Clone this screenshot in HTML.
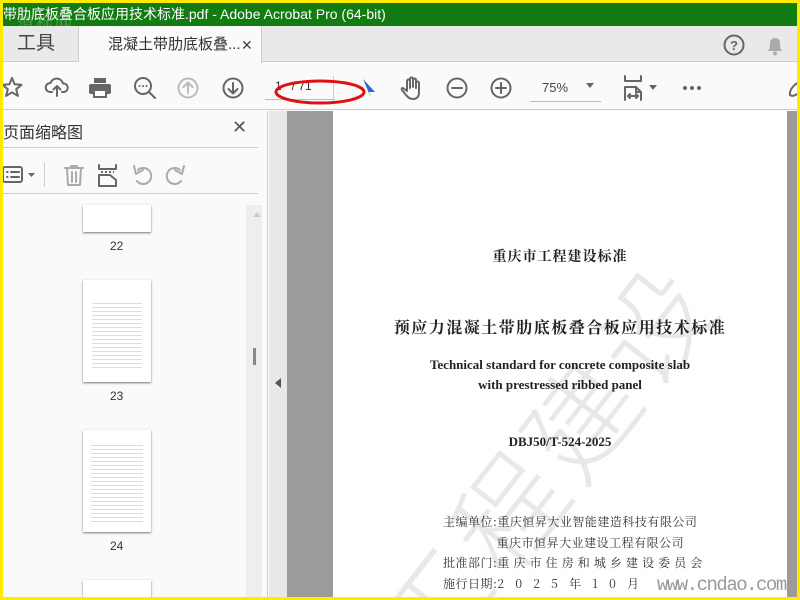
<!DOCTYPE html>
<html><head><meta charset="utf-8"><style>
*{margin:0;padding:0;box-sizing:border-box}
body{width:800px;height:600px;overflow:hidden;background:#ffeb00;position:relative;font-family:"Liberation Sans","Noto Sans CJK SC",sans-serif}
.a{position:absolute}
svg{position:absolute;overflow:visible}
.ic{fill:none;stroke:#666;stroke-width:2;stroke-linecap:round;stroke-linejoin:round}
.cj{font-family:"Noto Sans CJK SC",sans-serif}
.sf{font-family:"Noto Serif CJK SC","Liberation Serif",serif}
</style></head><body>
<div class="a" style="left:3px;top:3px;width:794px;height:594px;background:#fafafa;overflow:hidden">
<!-- title bar -->
<div class="a" style="left:0;top:0;width:794px;height:23px;background:#127b12;color:#fff;font-size:14px;line-height:22px;white-space:nowrap">带肋底板叠合板应用技术标准.pdf - Adobe Acrobat Pro (64-bit)</div>
<div class="a cj" style="left:14px;top:6px;color:rgba(200,220,200,.3);font-size:17px;letter-spacing:2px">道标网</div>
<!-- tab bar -->
<div class="a" style="left:0;top:23px;width:794px;height:36px;background:#e9e9e9;border-bottom:1px solid #ccc"></div>
<div class="a" style="left:0;top:23px;width:76px;height:36px;border-right:1px solid #ccc;color:#444;font-size:19px;line-height:36px;padding-left:14px">工具</div>
<div class="a" style="left:76px;top:23px;width:183px;height:37px;background:#fafafa;border-right:1px solid #ccc;font-size:15px;line-height:38px;padding-left:29px;color:#333">混凝土带肋底板叠... <span style="position:absolute;left:162px;font-size:14px;color:#444">✕</span></div>
<svg style="left:720px;top:31px" width="22" height="22"><circle cx="11" cy="11" r="9.5" class="ic"/><text x="11" y="16" font-size="13" font-weight="bold" fill="#666" text-anchor="middle" font-family="Liberation Sans">?</text></svg>
<svg style="left:762px;top:32px" width="20" height="22"><path d="M3 16 Q5 14 5 9 Q5 3 10 3 Q15 3 15 9 Q15 14 17 16 Z" fill="#aaa"/><circle cx="10" cy="18.5" r="2" fill="#aaa"/></svg>
<!-- toolbar -->
<div class="a" style="left:0;top:60px;width:794px;height:47px;background:#fafafa;border-bottom:1px solid #ccc"></div>
<svg style="left:-2px;top:73px" width="22" height="22"><path d="M11 2 L13.6 8.3 L20.5 8.8 L15.2 13.2 L16.9 19.9 L11 16.3 L5.1 19.9 L6.8 13.2 L1.5 8.8 L8.4 8.3 Z" class="ic"/></svg>
<svg style="left:42px;top:73px" width="24" height="22"><path d="M7 16 H5 A4.5 4.5 0 0 1 5.5 7 A6.5 6.5 0 0 1 18 7.5 A4 4 0 0 1 19 16 H17" class="ic"/><path d="M12 20 V10 M8.5 13.5 L12 10 L15.5 13.5" class="ic"/></svg>
<svg style="left:85px;top:74px" width="24" height="22"><rect x="6" y="1" width="12" height="5" fill="#666"/><rect x="1" y="7" width="22" height="10" rx="2" fill="#666"/><rect x="6" y="13" width="12" height="7" fill="#fff" stroke="#666" stroke-width="2"/></svg>
<svg style="left:130px;top:73px" width="24" height="24"><circle cx="10" cy="10" r="8" class="ic"/><path d="M16 16 L22 22" class="ic" stroke-width="2.5"/><circle cx="6.5" cy="10" r="1" fill="#666"/><circle cx="10" cy="10" r="1" fill="#666"/><circle cx="13.5" cy="10" r="1" fill="#666"/></svg>
<svg style="left:174px;top:74px" width="22" height="22"><circle cx="11" cy="11" r="9.5" class="ic" style="stroke:#bbb"/><path d="M11 16 V6 M6.5 10 L11 5.5 L15.5 10" class="ic" style="stroke:#bbb"/></svg>
<svg style="left:219px;top:74px" width="22" height="22"><circle cx="11" cy="11" r="9.5" class="ic"/><path d="M11 6 V16 M6.5 12 L11 16.5 L15.5 12" class="ic"/></svg>
<div class="a" style="left:262px;top:96px;width:70px;height:1px;background:#bbb"></div>
<div class="a" style="left:272px;top:76px;font-size:12px;color:#333">1&nbsp;&nbsp;&nbsp;/ 71</div>
<div class="a" style="left:330px;top:73px;width:1px;height:26px;background:#ccc"></div>
<svg style="left:270px;top:75px" width="95" height="32"><ellipse cx="47" cy="14" rx="44" ry="11" fill="none" stroke="#e01010" stroke-width="3"/></svg>
<svg style="left:358px;top:75px" width="16" height="22"><path d="M2 1 L14 14 L8 14 L10 20 Z" fill="#2f6bc6"/></svg>
<svg style="left:397px;top:73px" width="26" height="26"><path d="M7 14 V5 a1.5 1.5 0 0 1 3 0 V12 M10 11 V3 a1.5 1.5 0 0 1 3 0 V11 M13 11 V4 a1.5 1.5 0 0 1 3 0 V12 M16 12 V7 a1.5 1.5 0 0 1 3 0 V16 Q19 23 13 23 Q9 23 6 19 L2 14 Q1 12 3 12 L7 15" class="ic" stroke-width="1.8"/></svg>
<svg style="left:443px;top:74px" width="22" height="22"><circle cx="11" cy="11" r="9.5" class="ic"/><path d="M6 11 H16" class="ic"/></svg>
<svg style="left:487px;top:74px" width="22" height="22"><circle cx="11" cy="11" r="9.5" class="ic"/><path d="M6 11 H16 M11 6 V16" class="ic"/></svg>
<div class="a" style="left:527px;top:98px;width:71px;height:1px;background:#bbb"></div>
<div class="a" style="left:539px;top:77px;font-size:13px;color:#444">75%</div>
<div class="a" style="left:583px;top:80px;width:0;height:0;border-left:4px solid transparent;border-right:4px solid transparent;border-top:5px solid #666"></div>
<svg style="left:620px;top:72px" width="26" height="28"><path d="M2 1 V6 H18 V1 M2 25 V12 H13 L18 17 V25 M13 12 V17 H18 M5 21 H15 M5 21 L7 19 M5 21 L7 23 M15 21 L13 19 M15 21 L13 23" class="ic" stroke-width="1.8"/></svg>
<div class="a" style="left:646px;top:82px;width:0;height:0;border-left:4px solid transparent;border-right:4px solid transparent;border-top:5px solid #666"></div>
<div class="a" style="left:680px;top:83px;font-size:0"><span style="display:inline-block;width:4px;height:4px;border-radius:2px;background:#666;margin-right:3px"></span><span style="display:inline-block;width:4px;height:4px;border-radius:2px;background:#666;margin-right:3px"></span><span style="display:inline-block;width:4px;height:4px;border-radius:2px;background:#666"></span></div>
<svg style="left:784px;top:76px" width="12" height="20"><path d="M10 4 Q2 10 3 16 Q6 18 10 15" class="ic"/></svg>
<!-- left panel -->
<div class="a" style="left:0;top:108px;width:265px;height:490px;background:#fafafa;border-right:1px solid #ccc"></div>
<div class="a" style="left:0;top:116px;font-size:16px;color:#333">页面缩略图</div>
<div class="a" style="left:229px;top:114px;font-size:18px;color:#555">✕</div>
<div class="a" style="left:0;top:144px;width:255px;height:1px;background:#ccc"></div>
<svg style="left:-1px;top:162px" width="36" height="20"><rect x="1" y="2" width="19" height="15" rx="2" class="ic" stroke-width="1.8"/><path d="M5 7 H5.5 M9 7 H17 M5 12 H5.5 M9 12 H17" class="ic" stroke-width="2.5"/><path d="M26 8 L29.5 12 L33 8Z" fill="#666"/></svg>
<div class="a" style="left:41px;top:160px;width:1px;height:24px;background:#ccc"></div>
<svg style="left:60px;top:161px" width="22" height="23"><path d="M2 4 H20 M8 4 V2 H14 V4 M4 4 L5 21 H17 L18 4 M9 8 V18 M13 8 V18" class="ic" style="stroke:#aaa" stroke-width="1.8"/></svg>
<svg style="left:94px;top:161px" width="22" height="24"><path d="M2 1 V5 H19 V1 M2 22 V11 H13 L19 16 V22 Z" class="ic" stroke-width="1.8"/><path d="M4 8 H17" stroke="#666" stroke-dasharray="2 2" stroke-width="2"/></svg>
<svg style="left:128px;top:161px" width="22" height="22"><path d="M7 6 A8 8 0 1 1 6 17" class="ic" style="stroke:#aaa" stroke-width="2.5"/><path d="M3 2 L5 10 L12 6" class="ic" style="stroke:#aaa" stroke-width="2.5"/></svg>
<svg style="left:162px;top:161px" width="22" height="22"><path d="M15 6 A8 8 0 1 0 16 17" class="ic" style="stroke:#aaa" stroke-width="2.5"/><path d="M19 2 L17 10 L10 6" class="ic" style="stroke:#aaa" stroke-width="2.5"/></svg>
<div class="a" style="left:0;top:190px;width:255px;height:1px;background:#ccc"></div>
<!-- scrollbar -->
<div class="a" style="left:243px;top:202px;width:16px;height:396px;background:#eee"></div>
<div class="a" style="left:250px;top:209px;width:0;height:0;border-left:4px solid transparent;border-right:4px solid transparent;border-bottom:5px solid #ccc"></div>
<div class="a" style="left:250px;top:345px;width:3px;height:17px;background:#888"></div>
<!-- thumbnails -->
<div class="a" style="left:80px;top:202px;width:68px;height:27px;background:#fff;box-shadow:0 1px 2px #777"></div>
<div class="a" style="left:107px;top:236px;font-size:12px;color:#333">22</div>
<div class="a" style="left:80px;top:277px;width:68px;height:102px;background:#fff;box-shadow:0 1px 2px #777;background-image:repeating-linear-gradient(#fff 0 3px,#ddd 3px 4px);background-size:50px 70px;background-position:9px 20px;background-repeat:no-repeat"></div>
<div class="a" style="left:107px;top:386px;font-size:12px;color:#333">23</div>
<div class="a" style="left:80px;top:427px;width:68px;height:102px;background:#fff;box-shadow:0 1px 2px #777;background-image:repeating-linear-gradient(#fff 0 3px,#ddd 3px 4px);background-size:52px 80px;background-position:8px 12px;background-repeat:no-repeat"></div>
<div class="a" style="left:107px;top:536px;font-size:12px;color:#333">24</div>
<div class="a" style="left:80px;top:577px;width:68px;height:30px;background:#fff;box-shadow:0 1px 2px #777"></div>
<!-- collapse strip -->
<div class="a" style="left:266px;top:108px;width:18px;height:490px;background:#e8e8e8"></div>
<div class="a" style="left:272px;top:375px;width:0;height:0;border-top:5px solid transparent;border-bottom:5px solid transparent;border-right:6px solid #555"></div>
<!-- doc area -->
<div class="a" style="left:284px;top:108px;width:510px;height:490px;background:#9b9b9b"></div>
<div class="a" style="left:330px;top:108px;width:454px;height:490px;background:#fff;overflow:hidden">
<div class="a cj" style="left:20px;top:500px;font-size:110px;font-weight:300;color:rgba(0,0,0,.09);transform:rotate(-52deg);transform-origin:0 0;white-space:nowrap;line-height:1;letter-spacing:8px">工程建设</div>
<div class="a sf" style="left:0;width:454px;top:135px;text-align:center;font-size:14px;font-weight:bold;color:#222;letter-spacing:1px">重庆市工程建设标准</div>
<div class="a sf" style="left:0;width:454px;top:204px;text-align:center;font-size:16px;font-weight:bold;color:#222;letter-spacing:1.5px">预应力混凝土带肋底板叠合板应用技术标准</div>
<div class="a" style="left:0;width:454px;top:244px;text-align:center;font-family:'Liberation Serif',serif;font-size:13px;font-weight:bold;color:#222;line-height:20px">Technical standard for concrete composite slab<br>with prestressed ribbed panel</div>
<div class="a" style="left:0;width:454px;top:323px;text-align:center;font-family:'Liberation Serif',serif;font-size:13px;font-weight:bold;color:#222">DBJ50/T-524-2025</div>
<div class="a sf" style="left:110px;top:401px;font-size:12px;color:#333;line-height:20.5px;white-space:pre;letter-spacing:0.5px">主编单位:重庆恒昇大业智能建造科技有限公司
               重庆市恒昇大业建设工程有限公司
批准部门:重 庆 市 住 房 和 城 乡 建 设 委 员 会
施行日期:2   0   2   5   年   1   0   月</div>
<div class="a" style="left:324px;top:463px;font-family:'Liberation Mono',monospace;font-size:19px;color:#999;letter-spacing:-1.5px">www.cndao.com</div>
</div>
<div class="a" style="left:784px;top:108px;width:10px;height:490px;background:#9b9b9b"></div>
</div>
</body></html>
